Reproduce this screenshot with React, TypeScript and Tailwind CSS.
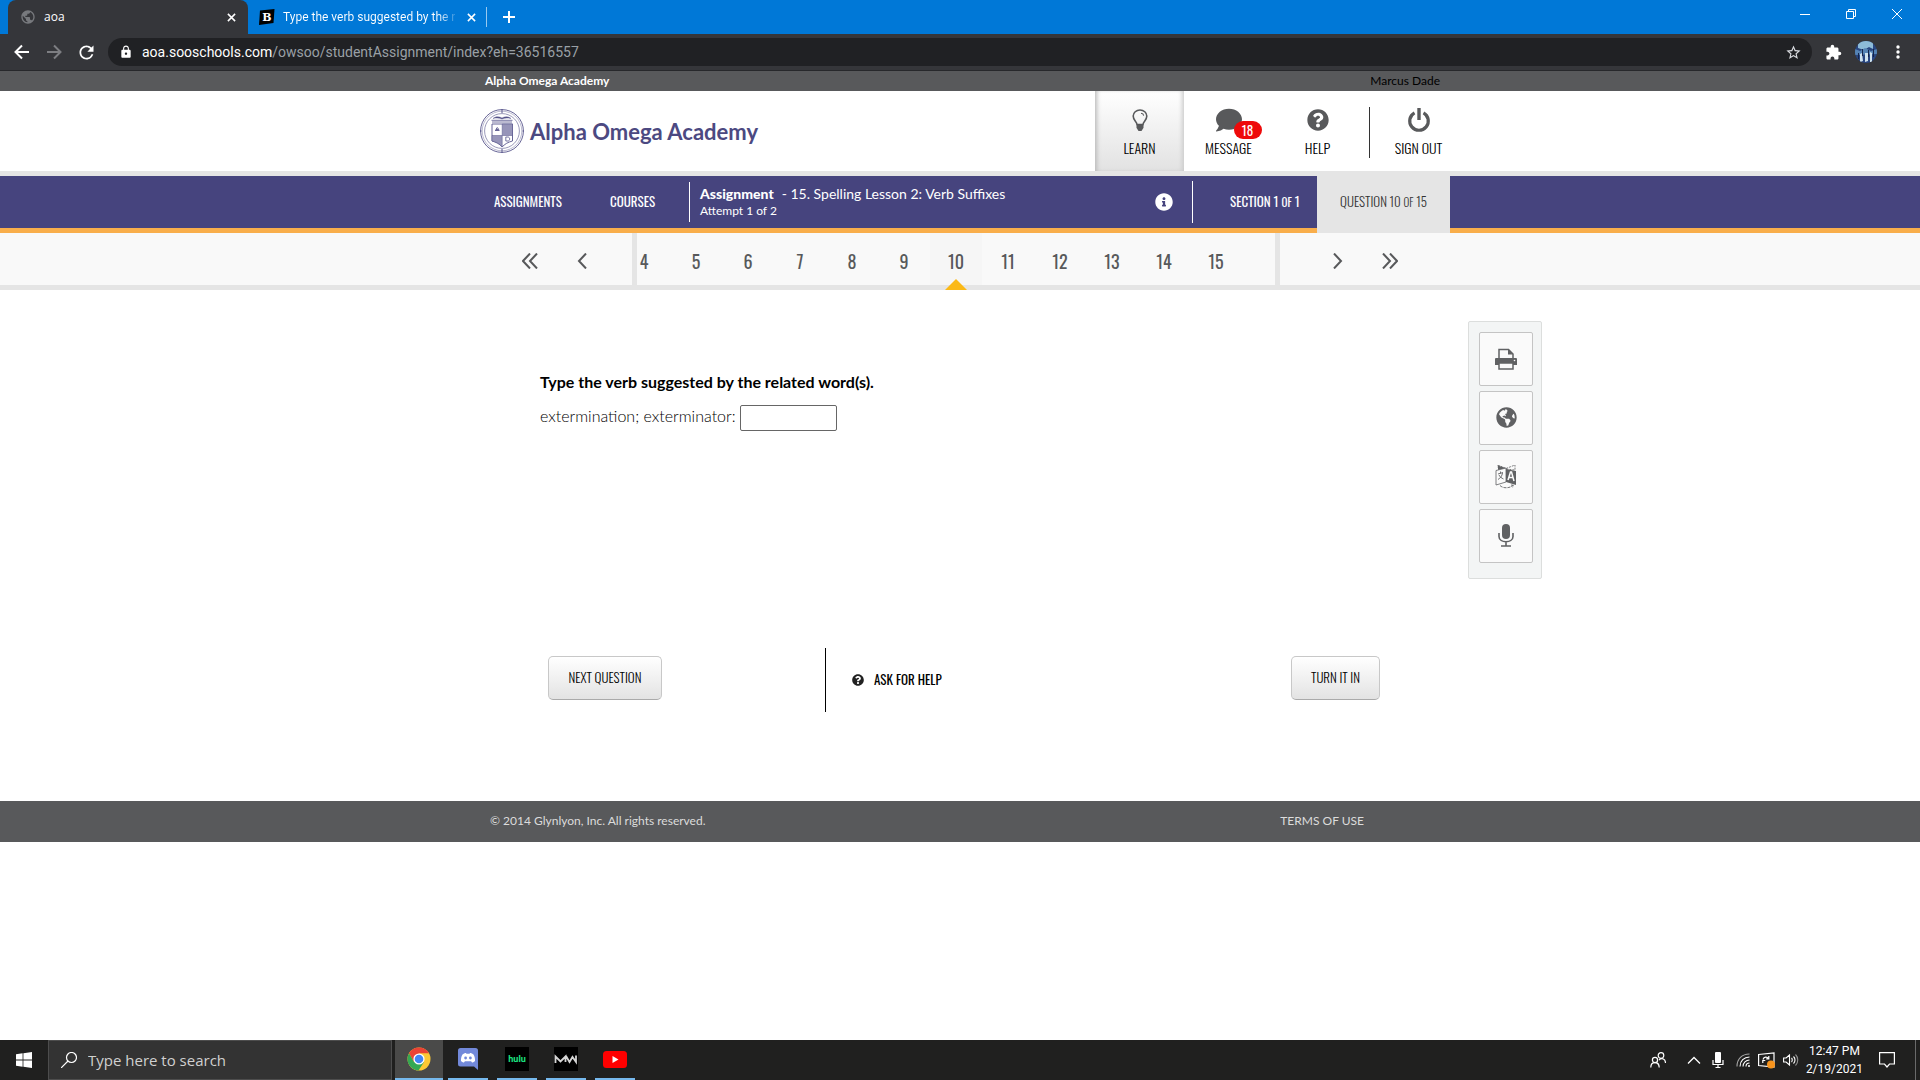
import { useState } from "react";
import type { ReactNode } from "react";
import { FaComment, FaGlobeAmericas, FaInfoCircle, FaQuestionCircle } from "react-icons/fa";
import { MdExtension, MdLock, MdPublic, MdRefresh, MdStarBorder } from "react-icons/md";

const questions = [4, 5, 6, 7, 8, 9, 10, 11, 12, 13, 14, 15];
const narrow = "font-['Oswald','Liberation_Sans_Narrow','Roboto_Condensed','Liberation_Sans',sans-serif]";
const segoe = "font-['Open_Sans','Noto_Sans',sans-serif]";

export default function App() {
  return (
    <div className="flex min-h-screen flex-col bg-white font-['Lato',sans-serif] text-black">
      <BrowserTabs />
      <BrowserToolbar />
      <SchoolHeader />
      <AssignmentNav />
      <QuestionPager />
      <Question />
      <footer className="bg-[#58595b] text-xs text-[#dcdcdc]">
        <div className="mx-auto flex h-[41px] max-w-[980px] items-center justify-between pr-[86px] pb-[2px] pl-5">
          <p>© 2014 Glynlyon, Inc. All rights reserved.</p>
          <a href="#terms">TERMS OF USE</a>
        </div>
      </footer>
      <div className="flex-1" />
      <Taskbar />
    </div>
  );
}

function CloseIcon() {
  return (
    <svg viewBox="0 0 10 10" className="h-[9px] w-[9px]" fill="none" stroke="currentColor" strokeWidth="1.7">
      <path d="M1 1l8 8M9 1L1 9" />
    </svg>
  );
}

function BrowserTabs() {
  return (
    <div className={`flex h-[34px] items-stretch bg-[#0078d7] pl-2 text-xs text-white ${segoe}`}>
      <div className="flex w-60 items-center rounded-t-lg bg-[#35363a] pr-3 pl-3">
        <MdPublic className="h-4 w-4 text-[#77797d]" />
        <span className="ml-2 flex-1">aoa</span>
        <button aria-label="Close aoa tab"><CloseIcon /></button>
      </div>
      <div className="flex w-[238px] items-center pr-[10px] pl-[11px]">
        <svg viewBox="0 0 16 16" className="h-4 w-4 shrink-0">
          <path d="M1 1.500L15.500 0l-1 14L0 16z" fill="#000" />
          <text x="8" y="12" textAnchor="middle" fontSize="11" fontWeight="900" fill="#fff" fontFamily="DejaVu Serif, serif">B</text>
        </svg>
        <span className="ml-2 bg-gradient-to-r from-white from-90% to-white/20 bg-clip-text font-['Roboto',sans-serif] whitespace-nowrap text-transparent">
          Type the verb suggested by the r
        </span>
        <button aria-label="Close second tab" className="ml-auto"><CloseIcon /></button>
      </div>
      <div className="h-5 w-px self-center bg-white/60" />
      <button aria-label="New tab" className="ml-[15px]">
        <svg viewBox="0 0 14 14" className="h-[14px] w-[14px]" stroke="currentColor" strokeWidth="2">
          <path d="M7 1v12M1 7h12" />
        </svg>
      </button>
      <div className="ml-auto flex h-7 text-white">
        <button aria-label="Minimize" className="flex w-[46px] items-center justify-center">
          <svg viewBox="0 0 10 10" className="h-[10px] w-[10px]" stroke="currentColor"><path d="M0 5.500h10" /></svg>
        </button>
        <button aria-label="Restore" className="flex w-[46px] items-center justify-center">
          <svg viewBox="0 0 10 10" className="h-[10px] w-[10px]" fill="none" stroke="currentColor">
            <path d="M.5 2.500h7v7h-7zM2.500 2.500v-2h7v7h-2" />
          </svg>
        </button>
        <button aria-label="Close" className="flex w-[46px] items-center justify-center">
          <svg viewBox="0 0 10 10" className="h-[10px] w-[10px]" stroke="currentColor"><path d="M0 0l10 10M10 0L0 10" /></svg>
        </button>
      </div>
    </div>
  );
}

function BrowserToolbar() {
  return (
    <div className="flex h-[37px] items-center border-b border-[#27282b] bg-[#35363a] pr-5 pl-[13px] font-['Roboto',sans-serif] text-sm text-white">
      <button aria-label="Back" className="w-8">
        <svg viewBox="0 0 18 18" className="h-[18px] w-[18px]" fill="none" stroke="currentColor" strokeWidth="2">
          <path d="M16 9H3M9 2.500L2.500 9 9 15.500" />
        </svg>
      </button>
      <button aria-label="Forward" className="w-[31px] text-[#7d7e82]">
        <svg viewBox="0 0 18 18" className="h-[18px] w-[18px]" fill="none" stroke="currentColor" strokeWidth="2">
          <path d="M2 9h13M9 2.500L15.500 9 9 15.500" />
        </svg>
      </button>
      <button aria-label="Reload"><MdRefresh className="h-[21px] w-[21px]" /></button>
      <div className="ml-[11px] flex h-7 flex-1 items-center rounded-full bg-[#202124] pr-[10px] pl-[11px]">
        <MdLock className="h-[14px] w-[14px] shrink-0" />
        <label htmlFor="url" className="ml-[9px] flex-1 cursor-text">
          <span className="text-white">aoa.sooschools.com</span>
          <span className="text-[#9aa0a6]">/owsoo/studentAssignment/index?eh=36516557</span>
        </label>
        <input id="url" className="sr-only" defaultValue="aoa.sooschools.com/owsoo/studentAssignment/index?eh=36516557" />
        <button aria-label="Bookmark"><MdStarBorder className="h-[17px] w-[17px] text-[#dadce0]" /></button>
      </div>
      <button aria-label="Extensions" className="ml-[13px]"><MdExtension className="h-[17px] w-[17px]" /></button>
      <button aria-label="Profile" className="ml-[13px]">
        <svg viewBox="0 0 22 22" className="h-[22px] w-[22px]">
          <clipPath id="avatar"><circle cx="11" cy="11" r="11" /></clipPath>
          <g clipPath="url(#avatar)">
            <path d="M0 0h22v22H0z" fill="#294680" />
            <path d="M3 0h15v8l-4-2-5 3-6-2z" fill="#8dbbd8" />
            <path d="M0 8l5 2 5-3 6 3 6-2v5l-22 1z" fill="#5583b4" />
            <path d="M5 13l2-1 1 8-3 1zM10 12h3v8l-3 1zM15 11l2 1v9h-2z" fill="#cfe2ee" />
            <path d="M7 8h1v7H7zM13 9h1v7h-1zM3 12h1v6H3zM18 8h1v8h-1z" fill="#16254a" />
          </g>
        </svg>
      </button>
      <button aria-label="Menu" className="ml-[19px]">
        <svg viewBox="0 0 4 16" className="h-4 w-1" fill="currentColor">
          <circle cx="2" cy="3" r="1.700" /><circle cx="2" cy="8" r="1.700" /><circle cx="2" cy="13" r="1.700" />
        </svg>
      </button>
    </div>
  );
}

function Crest() {
  return (
    <svg viewBox="0 0 44 44" className="h-11 w-11" fill="none" stroke="#56548a">
      <circle cx="22" cy="22" r="21.400" strokeWidth=".9" />
      <circle cx="22" cy="22" r="19.800" strokeWidth=".4" />
      <circle cx="22" cy="22" r="17.400" strokeWidth=".6" />
      <path d="M22 0v4M22 40v4M0 22h1.500M42.500 22H44" strokeWidth="1" />
      <path d="M13 9.500c3-2.500 6-2 9-.5 3-1.500 6-2 9 .5-3-.7-6-.7-9 .5-3-1.200-6-1.200-9-.5z" fill="#56548a" strokeWidth=".4" />
      <path d="M11.500 11.300h21M12 13h20" strokeWidth=".8" />
      <path d="M12 15h20.500v17c-4 1-8 3-10.300 6-2.200-3-6.200-5-10.200-6z" strokeWidth=".9" />
      <path d="M22.200 15h10.300v11.500H22.200z" fill="#9795b9" strokeWidth=".5" />
      <path d="M12 26.500h10.200V38C20 35 16 33 12 32z" fill="#9795b9" strokeWidth=".5" />
      <path d="M15 21.500h4.500M15.800 20.500l1.500-2 1.500 2z" strokeWidth=".9" />
      <path d="M25.800 28h2.200c2.200 0 2.200 4 0 4h-2.200z" strokeWidth=".8" />
    </svg>
  );
}

function LearnIcon() {
  return (
    <svg viewBox="0 0 16 23" className="h-[23px] w-4" fill="none" stroke="#58595b" strokeWidth="1.600">
      <path d="M5 15.500C4.800 12.500 1.200 11.500 1.200 7A6.800 6 0 0 1 14.800 7c0 4.500-3.600 5.500-3.800 8.500z" />
      <path d="M4.500 15.500h7v3.200l-2 3.300h-3l-2-3.300z" fill="#58595b" stroke="none" />
      <path d="M9 4.300c1.600.2 2.500 1 2.700 2.300" strokeWidth="1.100" />
    </svg>
  );
}

function PowerIcon() {
  return (
    <svg viewBox="0 0 24 24" className="h-6 w-6" fill="none" stroke="#58595b">
      <path d="M7.500 4.800a9.300 9.300 0 1 0 9 0" strokeWidth="3.200" />
      <path d="M12 0v12" strokeWidth="3.400" />
    </svg>
  );
}

function MenuLink({ href, label, children }: { href: string; label: string; children: ReactNode }) {
  return (
    <a href={href} className={`flex w-[89px] flex-col items-center pt-[17px] text-sm font-light ${narrow}`}>
      <span className="relative flex h-6 items-center">{children}</span>
      <span className="mt-[6px] leading-5">{label}</span>
    </a>
  );
}

function SchoolHeader() {
  return (
    <header>
      <div className="bg-[#58595b] text-xs">
        <div className="mx-auto flex h-5 max-w-[980px] items-center justify-between pr-[10px] pl-[15px]">
          <span className="font-bold text-white">Alpha Omega Academy</span>
          <span>Marcus Dade</span>
        </div>
      </div>
      <div className="border-b-[5px] border-[#e5e5e5]">
        <div className="mx-auto flex h-20 max-w-[980px] justify-between">
          <a href="#home" className="flex items-center gap-[6px] pl-[10px] text-[#4c4981]">
            <Crest />
            <span className="text-[22px] font-bold">Alpha Omega Academy</span>
          </a>
          <nav className="-mr-[13px] flex">
            <div className="flex bg-gradient-to-b from-white to-[#e2e2e2] shadow-[inset_4px_0_4px_-2px_#bbb,inset_-4px_0_4px_-2px_#ccc]">
              <MenuLink href="#learn" label="LEARN"><LearnIcon /></MenuLink>
            </div>
            <MenuLink href="#message" label="MESSAGE">
              <FaComment className="h-[26px] w-[26px] text-[#58595b]" />
              <span className="absolute top-[13px] left-[18px] flex h-[18px] w-7 items-center justify-center rounded-full bg-[#ee0a0a] text-[13px] font-normal text-white">
                18
              </span>
            </MenuLink>
            <MenuLink href="#help" label="HELP">
              <FaQuestionCircle className="h-[22px] w-[22px] text-[#58595b]" />
            </MenuLink>
            <div className="mt-[2px] ml-[7px] h-[51px] w-px self-center bg-[#333]" />
            <div className="pl-1"><MenuLink href="#signout" label="SIGN OUT"><PowerIcon /></MenuLink></div>
          </nav>
        </div>
      </div>
    </header>
  );
}

function AssignmentNav() {
  return (
    <nav className="border-b-[5px] border-[#f9ae4b] bg-[#46447e] text-white">
      <div className="mx-auto flex h-[52px] max-w-[980px] items-center">
        <a href="#assignments" className={`w-[140px] pl-6 text-[13px] ${narrow}`}>ASSIGNMENTS</a>
        <a href="#courses" className={`w-[79px] text-[13px] ${narrow}`}>COURSES</a>
        <div className="h-10 w-px bg-white" />
        <div className="flex-1 pl-[10px]">
          <p className="text-sm leading-[18px]">
            <strong className="mr-2 font-black">Assignment</strong>- 15. Spelling Lesson 2: Verb Suffixes
          </p>
          <p className="text-xs leading-4">Attempt 1 of 2</p>
        </div>
        <button aria-label="Assignment information" className="mr-[19px]"><FaInfoCircle className="h-[18px] w-[18px]" /></button>
        <div className="h-[42px] w-px bg-white" />
        <a href="#section" className={`w-[124px] pl-[37px] text-[13px] ${narrow}`}>
          SECTION 1 <span className="text-[11px]">OF</span> 1
        </a>
        <a href="#question" className={`-mb-[5px] flex h-[57px] w-[133px] items-center justify-center bg-[#e5e5e5] pb-[5px] text-[13px] font-light text-[#333] ${narrow}`}>
          <span>QUESTION 10 <span className="text-[11px]">OF</span> 15</span>
        </a>
      </div>
    </nav>
  );
}

function PagerArrow({ label, d }: { label: string; d: string }) {
  return (
    <button aria-label={label} className="flex w-[52px] items-center justify-center pt-1">
      <svg viewBox="0 0 16 16" className="h-4 w-4" fill="none" stroke="#58595b" strokeWidth="2"><path d={d} /></svg>
    </button>
  );
}

function QuestionPager() {
  const [current, setCurrent] = useState(10);

  return (
    <nav className="border-b-[5px] border-[#e5e5e5] bg-[#f9f9f9]">
      <div className="mx-auto flex h-[52px] max-w-[980px]">
        <div className="flex w-[167px] border-r-[5px] border-[#e5e5e5] pl-[34px]">
          <PagerArrow label="First question" d="M8 .5L1 8l7 7.500M15 .5L8 8l7 7.500" />
          <PagerArrow label="Previous question" d="M12 .5L5 8l7 7.500" />
        </div>
        <div className="-mb-[5px] flex flex-1 overflow-hidden">
          <ol className="-ml-[19px] flex">
            {questions.map((n) => (
              <li key={n} className={`relative h-[52px] w-[52px] shrink-0 ${n === current ? "bg-[#f6f6f6]" : ""}`}>
                <button onClick={() => setCurrent(n)} className={`h-full w-full pt-[3px] text-lg text-[#58595b] ${narrow}`}>
                  {n}
                </button>
                {n === current && (
                  <svg viewBox="0 0 22 11" className="absolute top-[46px] left-[15px] h-[11px] w-[22px]">
                    <path d="M11 0l11 11H0z" fill="#fbb917" />
                  </svg>
                )}
              </li>
            ))}
          </ol>
        </div>
        <div className="flex w-[175px] border-l-[5px] border-[#e5e5e5] pl-8">
          <PagerArrow label="Next question" d="M4 .5L11 8l-7 7.500" />
          <PagerArrow label="Last question" d="M1 .5L8 8l-7 7.500M8 .5L15 8l-7 7.500" />
        </div>
      </div>
    </nav>
  );
}

function ToolButton({ label, children }: { label: string; children: ReactNode }) {
  return (
    <button aria-label={label} className="flex h-[54px] w-[54px] items-center justify-center rounded-xs border border-[#c4c4c4] bg-[#fafafa] pb-px text-[#606163]">
      {children}
    </button>
  );
}

function Tools() {
  return (
    <aside className="mt-[31px] ml-[18px] flex h-[258px] w-[74px] flex-col gap-[5px] self-start rounded-xs border border-[#dcdedd] bg-[#f3f5f5] pt-[10px] pl-[10px]">
      <ToolButton label="Print">
        <svg viewBox="0 0 22 22" className="h-[22px] w-[22px]" fill="currentColor">
          <path d="M4 11V1.500h9.500L18 6v5" fill="#fafafa" stroke="currentColor" strokeWidth="1.500" />
          <path d="M13 1v5.500h5zM1 10h20a1 1 0 0 1 1 1v6H0v-6a1 1 0 0 1 1-1z" />
          <path d="M4 15h14v6H4z" fill="#fafafa" stroke="currentColor" strokeWidth="1.500" />
          <circle cx="19.500" cy="12.500" r=".8" fill="#fafafa" />
        </svg>
      </ToolButton>
      <ToolButton label="Web"><FaGlobeAmericas className="h-[21px] w-[21px]" /></ToolButton>
      <ToolButton label="Translate">
        <svg viewBox="0 0 22 24" className="h-6 w-[22px]" fill="none" stroke="currentColor">
          <path d="M3 0l8 3.500L20 0v5l-9-1-8-1z" strokeWidth=".8" strokeDasharray="2 1" />
          <path d="M3 .5l9 3-9 1.500zM11 4l10 2v14l-10-3z" fill="currentColor" stroke="none" />
          <path d="M1 5.500L11 3v14L1 20z" fill="#fafafa" strokeWidth=".8" />
          <path d="M3 9l5-1.500M5.500 6.500v2M7.500 8c-.5 3-2 5-4.500 6.500M4 10c1 2 2.500 3 4.500 4" strokeWidth=".9" />
          <path d="M13 15l2.500-8h1l2.500 9M14 12.500h4" stroke="#fafafa" strokeWidth="1.500" />
          <path d="M5 20.500c3 3 9 3 13 0M16 20l2.500.3-.8 2" strokeWidth=".9" strokeDasharray="3 1" />
        </svg>
      </ToolButton>
      <ToolButton label="Record">
        <svg viewBox="0 0 16 23" className="h-[23px] w-4" fill="none" stroke="currentColor">
          <rect x="4" y="0" width="8" height="15" rx="4" fill="currentColor" stroke="none" />
          <path d="M1 9v3.500c0 7 14 7 14 0V9M8 18v4M3 22h10" strokeWidth="1.600" />
        </svg>
      </ToolButton>
    </aside>
  );
}

function Question() {
  const button = `mb-1 h-11 rounded-[5px] border border-[#c8c8c8] border-b-[#aaa] bg-gradient-to-b from-white to-[#e3e3e3] text-[13px] font-light whitespace-nowrap text-black ${narrow}`;

  return (
    <main className="grid grid-cols-[1fr_minmax(0,980px)_1fr]">
      <div className="col-start-2 flex h-[511px] flex-col">
        <div className="pt-20 pl-[70px]">
          <h1 className="text-base leading-6 font-bold">Type the verb suggested by the related word(s).</h1>
          <div className="mt-[10px] flex items-center gap-1 text-base">
            <label htmlFor="answer" className="pb-1 font-light">extermination; exterminator:</label>
            <input id="answer" type="text" className="h-[26px] w-[97px] rounded-xs border border-[#666] px-1" />
          </div>
        </div>
        <div className="mt-[216px] flex h-16 items-center pr-[70px] pl-[78px]">
          <button className={`w-[114px] ${button}`}>NEXT QUESTION</button>
          <div className="ml-[163px] h-full w-px bg-black" />
          <a href="#ask" className={`ml-[26px] flex items-center gap-[10px] text-[13px] ${narrow}`}>
            <FaQuestionCircle className="h-3 w-3 text-[#222]" />
            ASK FOR HELP
          </a>
          <button className={`ml-auto w-[89px] ${button}`}>TURN IT IN</button>
        </div>
      </div>
      <Tools />
    </main>
  );
}

function AppTile({ label, active, children }: { label: string; active?: boolean; children: ReactNode }) {
  return (
    <button
      aria-label={label}
      className={`flex w-12 flex-col items-center justify-between ${active ? "bg-[#4a4a49]" : ""}`}
    >
      <span className="flex flex-1 items-center">{children}</span>
      <span className={`h-[2px] bg-[#76b9ed] ${active ? "w-full" : "w-10"}`} />
    </button>
  );
}

function Taskbar() {
  return (
    <div className={`flex h-10 bg-[#20201f] text-white ${segoe}`}>
      <button aria-label="Start" className="flex w-12 items-center justify-center">
        <svg viewBox="0 0 16 16" className="h-4 w-4" fill="currentColor">
          <path d="M0 2.200L6.600 1.300v6.300H0zM7.400 1.200L16 0v7.600H7.400zM0 8.400h6.600v6.300L0 13.800zM7.400 8.400H16V16l-8.600-1.200z" />
        </svg>
      </button>
      <label className="mr-[3px] flex w-[344px] items-center border border-[#4d4d4d] bg-[#333] pl-3">
        <svg viewBox="0 0 16 16" className="h-4 w-4" fill="none" stroke="currentColor" strokeWidth="1.200">
          <circle cx="10.500" cy="5.500" r="5" /><path d="M7 9l-7 7" />
        </svg>
        <input aria-label="Search" placeholder="Type here to search" className="ml-[11px] min-w-0 flex-1 bg-transparent text-[15px] outline-none placeholder:text-[#d0d0d0]" />
      </label>
      <div className="flex gap-px">
        <AppTile label="Chrome" active>
          <svg viewBox="0 0 24 24" className="h-6 w-6">
            <circle cx="12" cy="12" r="11.500" fill="#fcc934" />
            <path d="M2 6.250A11.500 11.500 0 0 1 22 6.250H12L7 15z" fill="#ea4335" />
            <path d="M2 6.250a11.500 11.500 0 0 0 9.500 17.250L17 15l-10 0z" fill="#34a853" />
            <circle cx="12" cy="12" r="5.600" fill="#fff" /><circle cx="12" cy="12" r="4.300" fill="#4285f4" />
          </svg>
        </AppTile>
        <AppTile label="Discord">
          <svg viewBox="0 0 20 22" className="h-[22px] w-5">
            <path d="M2.500 0h15A2.500 2.500 0 0 1 20 2.500V22l-4-3.500H2.500A2.500 2.500 0 0 1 0 16V2.500A2.500 2.500 0 0 1 2.500 0z" fill="#7289da" />
            <path d="M4.500 6.500C6 5.300 7.500 5 8 5l.4.800h3.200L12 5c.5 0 2 .3 3.500 1.500 1.200 2 1.700 4.500 1.500 6.500-1.200 1.200-2.500 1.500-3 1.500l-.9-1.300H6.900L6 14.500c-.5 0-1.800-.3-3-1.500-.2-2 .3-4.500 1.500-6.500z" fill="#fff" />
            <circle cx="7.600" cy="10" r="1.400" fill="#7289da" /><circle cx="12.400" cy="10" r="1.400" fill="#7289da" />
          </svg>
        </AppTile>
        <AppTile label="Hulu">
          <span className="flex h-6 w-6 items-center justify-center bg-black font-['Lato',sans-serif] text-[9px] font-black text-[#1ce783]">hulu</span>
        </AppTile>
        <AppTile label="Modern Warfare">
          <svg viewBox="0 0 24 24" className="h-6 w-6">
            <path d="M0 0h24v24H0z" fill="#000" />
            <path d="M1.500 16V9.500l5 5 5-5V15M12 9l3.500 6 3-5 3.500 5V8.500" fill="none" stroke="#d5d5d5" strokeWidth="1.800" />
          </svg>
        </AppTile>
        <AppTile label="YouTube">
          <svg viewBox="0 0 24 17" className="h-[17px] w-6">
            <rect width="24" height="17" rx="3.500" fill="#f00" /><path d="M9.500 5v7l6-3.500z" fill="#fff" />
          </svg>
        </AppTile>
      </div>
      <div className="ml-auto flex items-center">
        <svg viewBox="0 0 16 16" className="mr-[21px] h-4 w-4" fill="none" stroke="currentColor" strokeWidth="1.200">
          <circle cx="11" cy="3.500" r="2.800" /><circle cx="5" cy="8" r="2.600" />
          <path d="M.8 15.500c0-6.500 8.400-6.500 8.400 0M9 8c3-3 6.500-.5 6.500 3" />
        </svg>
        <svg viewBox="0 0 14 8" className="mr-[11px] h-2 w-[14px]" fill="none" stroke="currentColor" strokeWidth="1.300">
          <path d="M1 7.500l6-6 6 6" />
        </svg>
        <svg viewBox="0 0 12 16" className="mr-3 h-4 w-3" fill="none" stroke="currentColor" strokeWidth="1.200">
          <rect x="3" y="0" width="6" height="11" rx="1" fill="currentColor" stroke="none" />
          <path d="M1 8v4.500h10V8M6 12.500v3M3.500 15.500h5" />
        </svg>
        <svg viewBox="0 0 14 14" className="mr-2 h-[14px] w-[14px]" fill="none" stroke="currentColor" strokeWidth="1.100">
          <path d="M1 13.500C1 6 6 1 13.500 1" opacity=".6" />
          <path d="M4 13.500C4 8 8 4 13.500 4M7 13.500C7 10 10 7 13.500 7M10 13.500c0-2 1.500-3.500 3.500-3.500" />
          <circle cx="13" cy="13" r="1" fill="currentColor" stroke="none" />
        </svg>
        <svg viewBox="0 0 17 17" className="mr-2 h-[17px] w-[17px]" fill="none" stroke="currentColor" strokeWidth="1.200">
          <path d="M.6 2.500L16 1v14L.6 13.500z" />
          <path d="M5 7.500C6 4.500 9 4.500 10.500 6.500M10.800 4v2.800H8.200M4.800 11V8.500h2.500" />
          <circle cx="13" cy="12.500" r="4" fill="#f7941d" stroke="none" />
        </svg>
        <svg viewBox="0 0 16 14" className="mr-[7px] h-[14px] w-4" fill="none" stroke="currentColor" strokeWidth="1.100">
          <path d="M.6 5h2.500L6.500 2v10L3.100 9H.6zM8.500 5c1 1 1 3 0 4M10.500 3.500c2 2 2 5 0 7" />
          <path d="M12.500 1.500c3 3 3 8 0 11" opacity=".5" />
        </svg>
        <div className="mr-4 text-center font-['Roboto',sans-serif] text-xs leading-[18px]">
          <p>12:47 PM</p>
          <p>2/19/2021</p>
        </div>
        <button aria-label="Notifications">
          <svg viewBox="0 0 16 16" className="mr-5 h-4 w-4" fill="none" stroke="currentColor" strokeWidth="1.200">
            <path d="M.6.600h14.800v11.400h-4.900L8 15l-2.500-3H.6z" />
          </svg>
        </button>
        <div className="mr-1 h-10 w-px bg-[#6a6a6a]" />
      </div>
    </div>
  );
}
